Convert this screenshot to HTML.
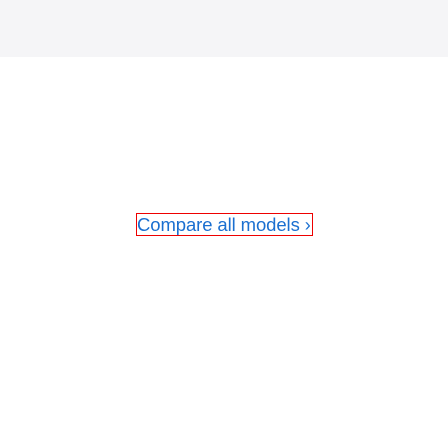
<!DOCTYPE html>
<html><head><meta charset="utf-8"><style>
html,body{margin:0;padding:0;width:448px;height:448px;background:#fff;overflow:hidden}
.top{position:absolute;left:0;top:0;width:448px;height:57px;background:#f5f5f7}
.link{position:absolute;left:136px;top:213px;width:175px;height:21px;border:1px solid #e00;
font-family:"Liberation Sans",sans-serif;font-size:18.5px;line-height:21px;color:#1a6fd0;white-space:nowrap;letter-spacing:-0.1px;overflow:hidden}
</style></head><body>
<div class="top"></div>
<div class="link">Compare all models <span style="font-size:18px">›</span></div>
</body></html>
